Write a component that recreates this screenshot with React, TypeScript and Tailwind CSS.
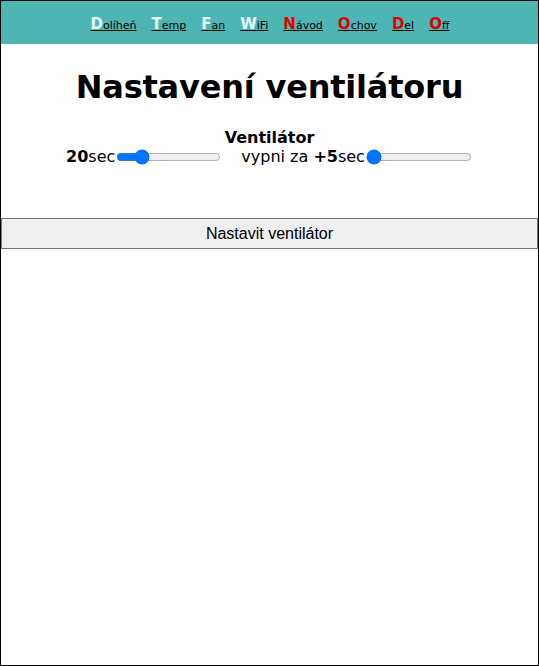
import React from "react";

const items: { first: string; rest: string; red?: boolean }[] = [
  { first: "D", rest: "olíheň" },
  { first: "T", rest: "emp" },
  { first: "F", rest: "an" },
  { first: "W", rest: "iFi" },
  { first: "N", rest: "ávod", red: true },
  { first: "O", rest: "chov", red: true },
  { first: "D", rest: "el", red: true },
  { first: "O", rest: "ff", red: true },
];

export default function App() {
  return (
    <div
      className="w-[539px] h-[666px] border border-black bg-white overflow-hidden"
      style={{ fontFamily: '"DejaVu Sans", Verdana, sans-serif' }}
    >
      <div className="h-[43px] bg-[#4db6b3] flex items-center justify-center pt-[3px] pl-[1px]">
        <div className="flex items-baseline gap-[15px]">
          {items.map((it, i) => (
            <a
              key={i}
              className="underline text-black text-[11px] leading-none"
              style={{ fontFamily: '"DejaVu Sans", sans-serif' }}
            >
              <span
                className={`text-[15px] font-bold ${it.red ? "text-[#e00000]" : "text-[#e8ffff]"}`}
                style={{ fontFamily: '"DejaVu Sans", sans-serif' }}
              >
                {it.first}
              </span>
              {it.rest}
            </a>
          ))}
        </div>
      </div>
      <h1 className="text-center font-bold text-[32px] leading-none text-black mt-[27px] tracking-[-0.2px]">
        Nastavení ventilátoru
      </h1>
      <div className="text-center mt-[25px] text-[16px] text-black leading-[19px]">
        <div className="font-bold">Ventilátor</div>
        <div className="flex items-center justify-center">
          <b>20</b>
          <span>sec</span>
          <input type="range" defaultValue={20} className="w-[105px] mx-[1px]" readOnly />
          <span className="ml-[19px]">vypni za&nbsp;</span>
          <b>+5</b>
          <span>sec</span>
          <input type="range" defaultValue={0} className="w-[106px] mx-[1px]" readOnly />
        </div>
      </div>
      <div className="mt-[52px]">
        <button
          className="w-[537px] h-[31px] bg-[#efefef] border border-[#767676] text-[16px] text-black"
          style={{ fontFamily: '"Liberation Sans", Arial, sans-serif' }}
        >
          Nastavit ventilátor
        </button>
      </div>
    </div>
  );
}
